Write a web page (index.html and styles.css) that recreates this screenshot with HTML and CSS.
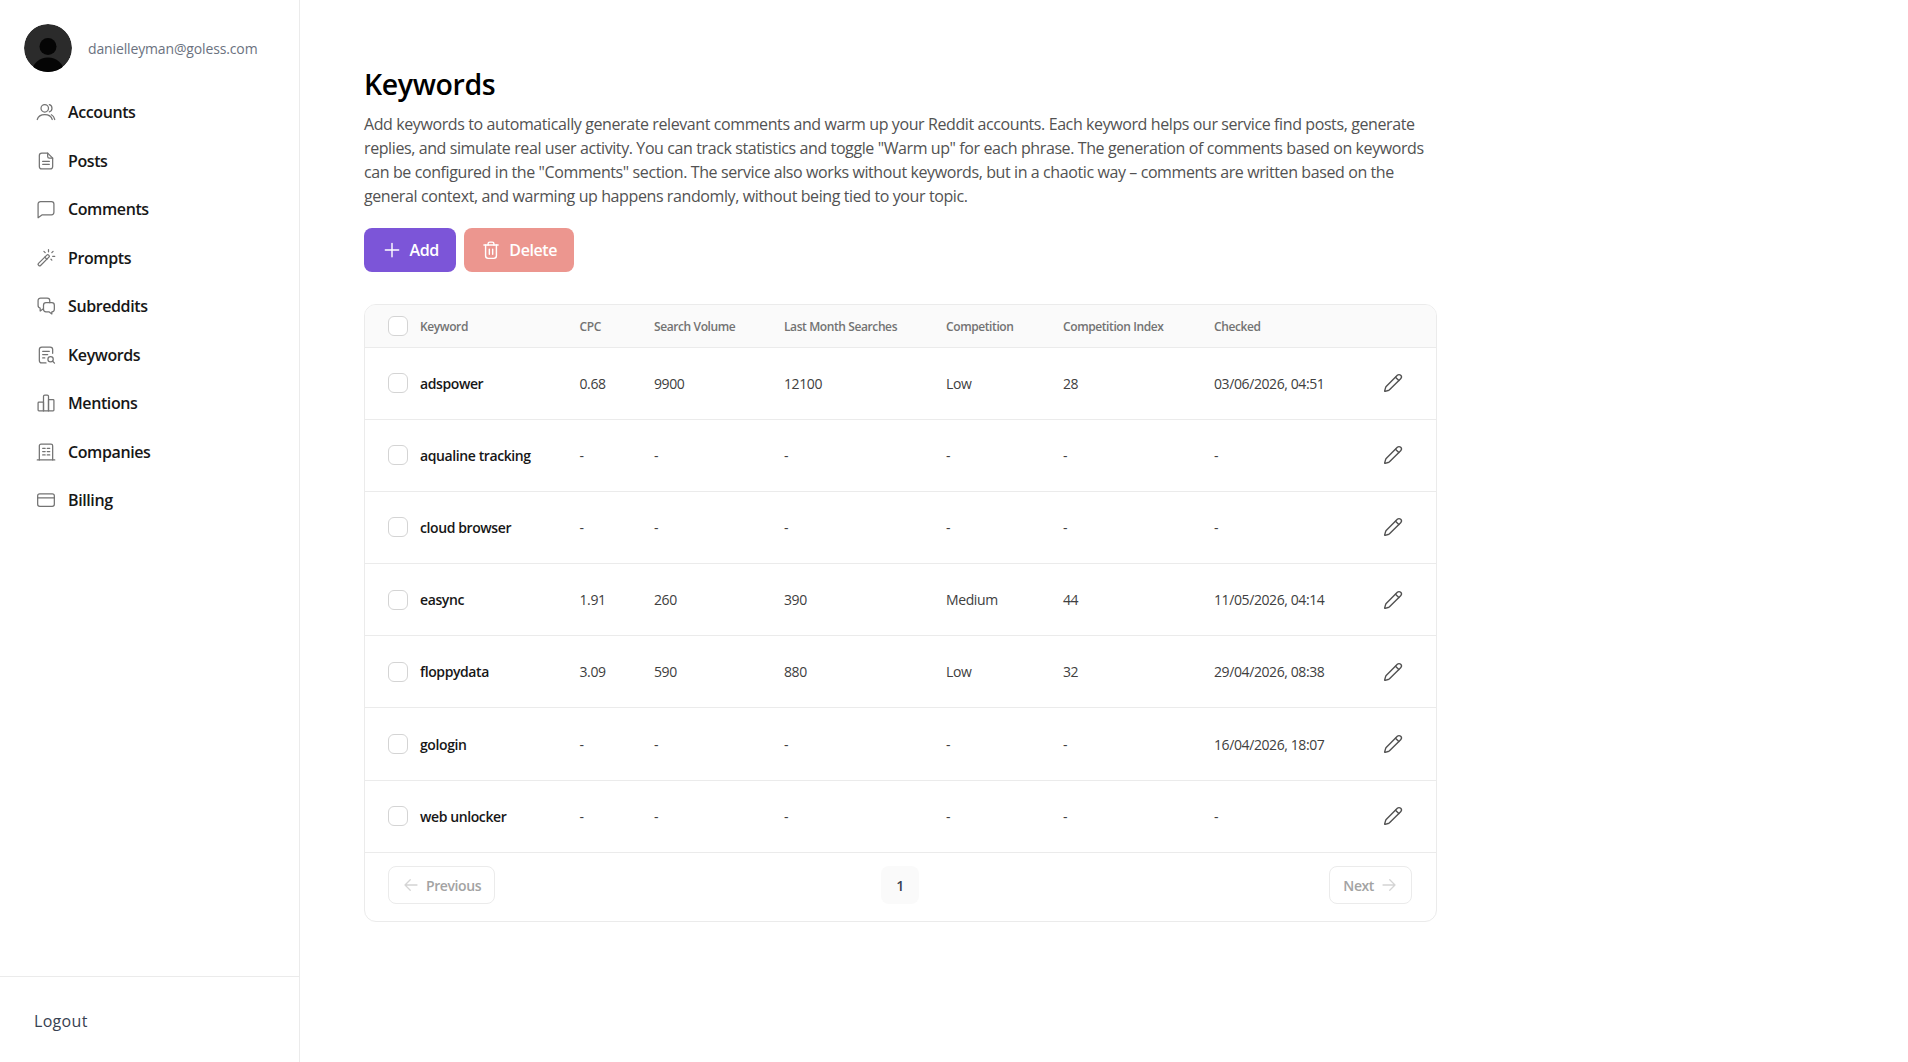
FILE: index.html
```html
<!DOCTYPE html>
<html lang="en">
<head>
    <meta charset="UTF-8">
    <title>Keywords</title>
    <link rel="stylesheet" href="styles.css">
</head>
<body>
    <aside class="sidebar">
        <div>
            <div class="profile">
                <svg class="avatar" viewBox="0 0 48 48">
                    <circle cx="24" cy="24" r="24" fill="#2b2b2b"/>
                    <circle cx="24" cy="22.500" r="8.500" fill="#050505"/>
                    <ellipse cx="24" cy="47" rx="15.500" ry="13.500" fill="#050505"/>
                </svg>
                <span class="email">danielleyman@goless.com</span>
            </div>
            <nav class="nav">
                <a class="nav-item">
                    <svg class="nav-icon" viewBox="0 0 24 24"><circle cx="10.500" cy="7.500" r="4.500"/><path d="M16 3.200a4.500 4.500 0 0 1 0 8.600"/><path d="M1.500 21c1-3.700 4.500-6 9-6s8 2.300 9 6"/><path d="M18.500 15.300c1.900.9 3.300 2.900 4 5.700"/></svg>
                    Accounts
                </a>
                <a class="nav-item">
                    <svg class="nav-icon" viewBox="0 0 24 24"><path d="M14 2.500H7a3 3 0 0 0-3 3v13a3 3 0 0 0 3 3h10a3 3 0 0 0 3-3v-10z"/><path d="M14 2.500v4a2 2 0 0 0 2 2h4"/><path d="M8 12.500h8M8 16h8"/></svg>
                    Posts
                </a>
                <a class="nav-item">
                    <svg class="nav-icon" viewBox="0 0 24 24"><path d="M2.500 6a3 3 0 0 1 3-3h13a3 3 0 0 1 3 3v10a3 3 0 0 1-3 3H7.500l-5 3.500z"/></svg>
                    Comments
                </a>
                <a class="nav-item">
                    <svg class="nav-icon" viewBox="0 0 24 24"><path d="M3 18.500 13 8.500a1.500 1.500 0 0 1 2.100 0l.4.4a1.500 1.500 0 0 1 0 2.100l-10 10a1.500 1.500 0 0 1-2.100 0l-.4-.4a1.500 1.500 0 0 1 0-2.100z"/><path d="m10.500 11 2.500 2.500"/><path d="M15 2v2.500M20.500 4 19 5.500M22.500 10H20M9.500 4 11 5.500M19 14.500l-1-1"/></svg>
                    Prompts
                </a>
                <a class="nav-item">
                    <svg class="nav-icon" viewBox="0 0 24 24"><path d="M8.500 15.500 5 18v-3.500a3 3 0 0 1-2.500-3V5.500a3 3 0 0 1 3-3h8a3 3 0 0 1 3 3V8"/><path d="M12 8h7a3 3 0 0 1 3 3v5a3 3 0 0 1-3 3v2.500L15.500 19H12a3 3 0 0 1-3-3v-5a3 3 0 0 1 3-3z"/></svg>
                    Subreddits
                </a>
                <a class="nav-item">
                    <svg class="nav-icon" viewBox="0 0 24 24"><path d="M20 10V5.500a3 3 0 0 0-3-3H7a3 3 0 0 0-3 3v13a3 3 0 0 0 3 3h5"/><path d="M8 7.500h8M8 11.500h6M8 15.500h2.500"/><circle cx="17.500" cy="17" r="3.200"/><path d="m20 19.500 2.200 2.200"/></svg>
                    Keywords
                </a>
                <a class="nav-item">
                    <svg class="nav-icon" viewBox="0 0 24 24"><path d="M2.500 12a1 1 0 0 1 1-1h5.500v10.500H3.500a1 1 0 0 1-1-1z"/><path d="M9 4a1.500 1.500 0 0 1 1.500-1.500h3A1.500 1.500 0 0 1 15 4v17.500H9z"/><path d="M15 8h5.500a1 1 0 0 1 1 1v11.500a1 1 0 0 1-1 1H15z"/></svg>
                    Mentions
                </a>
                <a class="nav-item">
                    <svg class="nav-icon" viewBox="0 0 24 24"><path d="M1.500 21.500h21"/><path d="M4 21.500V4.500a2 2 0 0 1 2-2h12a2 2 0 0 1 2 2v17"/><path d="M8 7.500h3M13.500 7.500h3M8 11.500h3M13.500 11.500h3M8 15.500h3M13.500 15.500h3"/></svg>
                    Companies
                </a>
                <a class="nav-item">
                    <svg class="nav-icon" viewBox="0 0 24 24"><rect x="2" y="4.500" width="20" height="15" rx="2.500"/><path d="M2 9.500h20"/></svg>
                    Billing
                </a>
            </nav>
        </div>
        <div class="sidebar-footer">Logout</div>
    </aside>

    <main class="content">
        <h1 class="title">Keywords</h1>
        <p class="intro">Add keywords to automatically generate relevant comments and warm up your Reddit accounts. Each keyword helps our service find posts, generate replies, and simulate real user activity. You can track statistics and toggle "Warm up" for each phrase. The generation of comments based on keywords can be configured in the "Comments" section. The service also works without keywords, but in a chaotic way – comments are written based on the general context, and warming up happens randomly, without being tied to your topic.</p>

        <div class="actions">
            <button class="btn btn-add">
                <svg class="btn-icon" viewBox="0 0 24 24"><path d="M12 4v16M4 12h16"/></svg>
                Add
            </button>
            <button class="btn btn-delete">
                <svg class="btn-icon" viewBox="0 0 24 24"><path d="M3.500 6h17"/><path d="M8.500 6V4.500a2 2 0 0 1 2-2h3a2 2 0 0 1 2 2V6"/><path d="M5.500 6v13a3 3 0 0 0 3 3h7a3 3 0 0 0 3-3V6"/><path d="M10 11v6M14 11v6"/></svg>
                Delete
            </button>
        </div>

        <div class="card">
            <table class="table">
                <colgroup>
                    <col class="col-keyword">
                    <col class="col-cpc">
                    <col class="col-volume">
                    <col class="col-searches">
                    <col class="col-competition">
                    <col class="col-index">
                    <col class="col-checked">
                    <col>
                </colgroup>
                <thead>
                    <tr>
                        <th><div class="name-cell"><input type="checkbox" class="check"><span>Keyword</span></div></th>
                        <th>CPC</th>
                        <th>Search Volume</th>
                        <th>Last Month Searches</th>
                        <th>Competition</th>
                        <th>Competition Index</th>
                        <th>Checked</th>
                        <th></th>
                    </tr>
                </thead>
                <tbody id="rows"></tbody>
            </table>
            <div class="pager">
                <button class="page-btn">
                    <svg class="page-icon" viewBox="0 0 24 24"><path d="M20 12H4M11 5l-7 7 7 7"/></svg>
                    Previous
                </button>
                <span class="page-num">1</span>
                <button class="page-btn page-next">
                    Next
                    <svg class="page-icon" viewBox="0 0 24 24"><path d="M4 12h16M13 5l7 7-7 7"/></svg>
                </button>
            </div>
        </div>
    </main>

    <script>
        const keywords = [
            ['adspower', '0.68', '9900', '12100', 'Low', '28', '03/06/2026, 04:51'],
            ['aqualine tracking', '-', '-', '-', '-', '-', '-'],
            ['cloud browser', '-', '-', '-', '-', '-', '-'],
            ['easync', '1.91', '260', '390', 'Medium', '44', '11/05/2026, 04:14'],
            ['floppydata', '3.09', '590', '880', 'Low', '32', '29/04/2026, 08:38'],
            ['gologin', '-', '-', '-', '-', '-', '16/04/2026, 18:07'],
            ['web unlocker', '-', '-', '-', '-', '-', '-']
        ];

        const pencil = '<svg class="edit-icon" viewBox="0 0 24 24"><path d="M21.200 6.800a2.800 2.800 0 0 0-4-4L3.800 16.200a2 2 0 0 0-.5.800L2 21.400a.5.500 0 0 0 .6.600l4.400-1.300a2 2 0 0 0 .8-.5z"/><path d="m15 5 4 4"/></svg>';

        document.getElementById('rows').innerHTML = keywords.map(function (row) {
            const cells = row.slice(1).map(c => `<td>${c}</td>`).join('');
            return `<tr><td><div class="name-cell"><input type="checkbox" class="check"><span class="keyword">${row[0]}</span></div></td>${cells}<td>${pencil}</td></tr>`;
        }).join('');
    </script>
</body>
</html>
```

FILE: styles.css
```css
* {
    box-sizing: border-box;
}

body {
    margin: 0;
    display: flex;
    min-height: 100vh;
    background-color: white;
    font-family: "Open Sans", "Noto Sans", sans-serif;
    letter-spacing: -0.025em;
    color: #171717;
}

.sidebar {
    width: 300px;
    flex-shrink: 0;
    height: 1062px;
    display: flex;
    flex-direction: column;
    justify-content: space-between;
    border-right: 1px solid #ebebeb;
}

.profile {
    display: flex;
    align-items: center;
    gap: 16px;
    padding: 24px 24px 16px;
}

.avatar {
    width: 48px;
    height: 48px;
    border-radius: 50%;
}

.email {
    font-size: 14px;
    font-weight: 500;
    letter-spacing: -0.01em;
    color: #6b7280;
}

.nav-item {
    display: flex;
    align-items: center;
    gap: 12px;
    height: 48.5px;
    padding-left: 36px;
    font-size: 16px;
    font-weight: 550;
    letter-spacing: -0.025em;
}

.nav-icon {
    width: 20px;
    height: 20px;
    fill: none;
    stroke: #737373;
    stroke-width: 1.5;
    stroke-linecap: round;
    stroke-linejoin: round;
}

.sidebar-footer {
    height: 86px;
    padding: 33px 34px 0;
    border-top: 1px solid #ebebeb;
    font-size: 16px;
    font-weight: 500;
    letter-spacing: 0.02em;
    color: #374151;
}

.content {
    width: 1137px;
    padding: 65px 0 0 64px;
}

.title {
    margin: 0 0 9px;
    font-size: 28.5px;
    line-height: 38px;
    font-weight: 600;
    color: #000;
}

.intro {
    margin: 0 0 20px;
    font-size: 16px;
    line-height: 24px;
    color: #525252;
}

.actions {
    display: flex;
    gap: 8px;
    margin-bottom: 32px;
}

.btn {
    display: flex;
    align-items: center;
    gap: 8px;
    height: 44px;
    padding: 0 17px;
    border: none;
    border-radius: 8px;
    font-family: inherit;
    letter-spacing: inherit;
    font-size: 16px;
    font-weight: 600;
    color: white;
}

.btn-add {
    padding: 0 17.5px;
    background-color: #7c55d8;
}

.btn-delete {
    background-color: #ec968f;
}

.btn-icon {
    width: 20px;
    height: 20px;
    fill: none;
    stroke: white;
    stroke-width: 1.7;
    stroke-linecap: round;
    stroke-linejoin: round;
}

.card {
    border: 1px solid #ebebeb;
    border-radius: 12px;
    overflow: hidden;
}

.table {
    width: 100%;
    border-collapse: collapse;
    table-layout: fixed;
}

.col-keyword { width: 214.5px; }
.col-cpc { width: 74.5px; }
.col-volume { width: 130px; }
.col-searches { width: 162px; }
.col-competition { width: 117px; }
.col-index { width: 151px; }
.col-checked { width: 169px; }

.table th {
    height: 42px;
    padding: 1px 0 0;
    background-color: #fafafa;
    border-bottom: 1px solid #ebebeb;
    text-align: left;
    font-size: 12px;
    font-weight: 600;
    color: #737373;
}

.table td {
    height: 72.2px;
    padding: 0;
    border-bottom: 1px solid #ebebeb;
    font-size: 14px;
    color: #404040;
}

.name-cell {
    display: flex;
    align-items: center;
    gap: 12px;
    padding-left: 23px;
}

.check {
    appearance: none;
    width: 20px;
    height: 20px;
    margin: 0;
    background-color: white;
    border: 1px solid #d4d4d4;
    border-radius: 6px;
}

.keyword {
    font-weight: 550;
    color: #171717;
}

.edit-icon {
    display: block;
    width: 20px;
    height: 20px;
    fill: none;
    stroke: #525252;
    stroke-width: 1.7;
    stroke-linecap: round;
    stroke-linejoin: round;
}

.pager {
    display: grid;
    grid-template-columns: 1fr auto 1fr;
    align-items: center;
    justify-items: start;
    height: 68px;
    padding: 0 24px 3px 23px;
}

.page-btn {
    display: flex;
    align-items: center;
    gap: 6px;
    height: 38px;
    padding: 0 13px;
    background-color: white;
    border: 1px solid #ebebeb;
    border-radius: 8px;
    font-family: inherit;
    letter-spacing: inherit;
    font-size: 14px;
    font-weight: 600;
    color: #a3a3a3;
}

.page-next {
    justify-self: end;
}

.page-icon {
    width: 18px;
    height: 18px;
    fill: none;
    stroke: #d4d4d4;
    stroke-width: 1.7;
    stroke-linecap: round;
    stroke-linejoin: round;
}

.page-num {
    width: 38px;
    height: 38px;
    display: flex;
    align-items: center;
    justify-content: center;
    background-color: #fafafa;
    border-radius: 8px;
    font-size: 14px;
    font-weight: 600;
    color: #374151;
}
```
